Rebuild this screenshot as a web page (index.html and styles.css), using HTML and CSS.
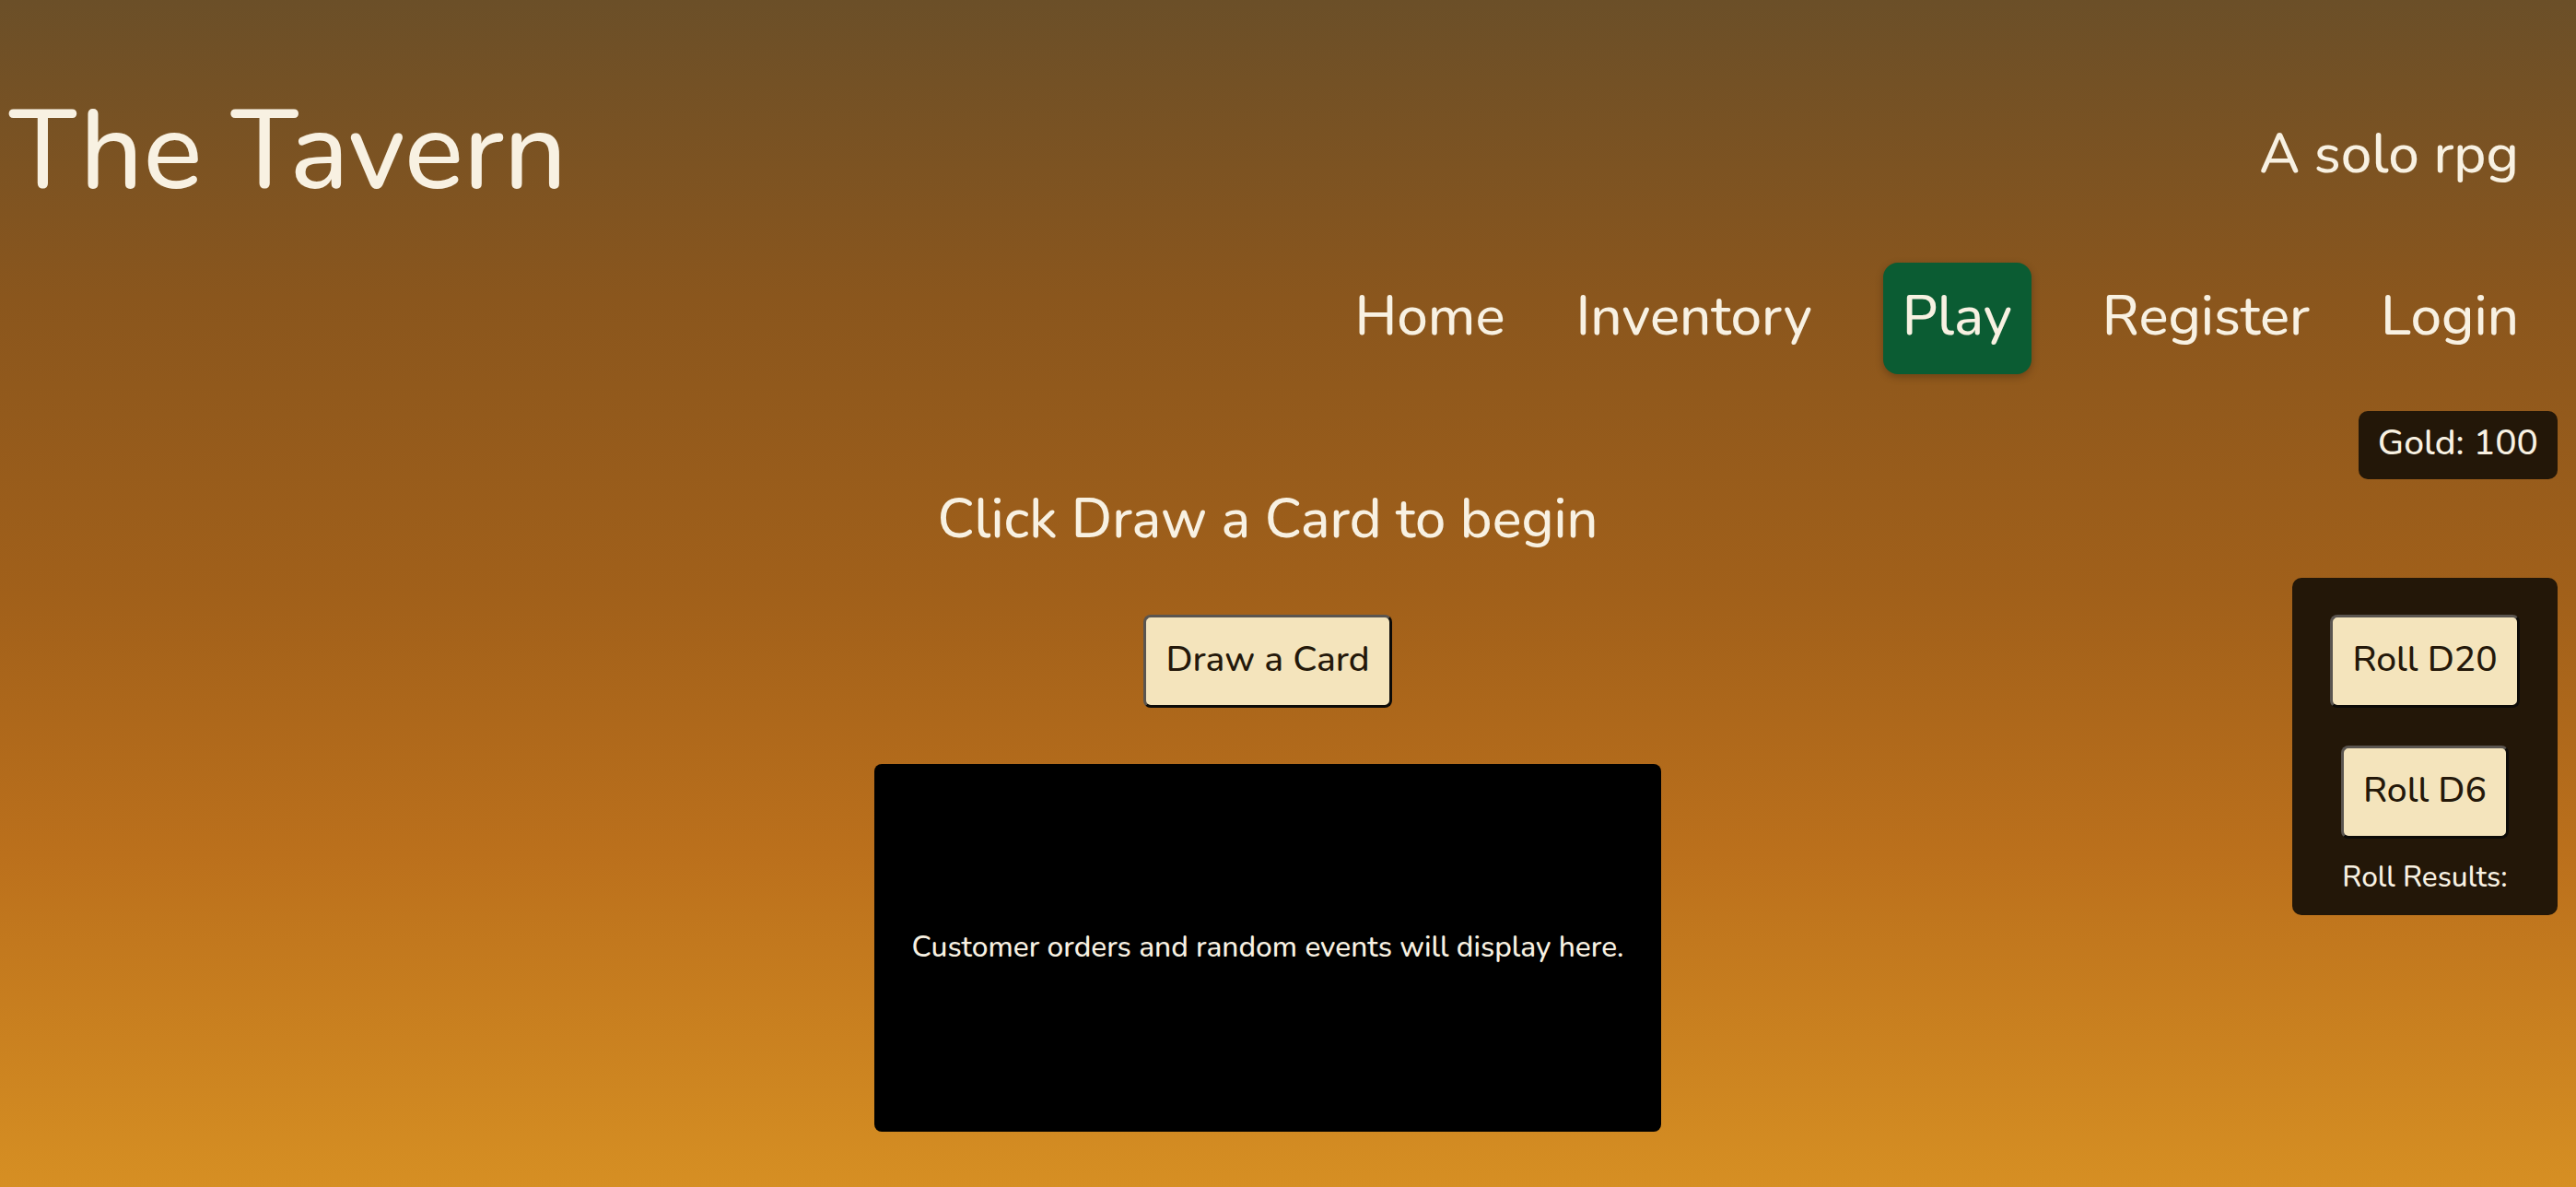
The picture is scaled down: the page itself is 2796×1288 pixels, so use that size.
FILE: index.html
```html
<!DOCTYPE html>
<html lang="en">
<head>
<meta charset="utf-8">
<title>The Tavern</title>
<link rel="stylesheet" href="styles.css">
</head>
<body>
<div class="page">
  <header class="site-header">
    <div class="brand-row">
      <h1 class="brand">The Tavern</h1>
      <p class="tagline">A solo rpg</p>
    </div>
    <nav class="main-nav">
      <a class="nav-link" href="#">Home</a>
      <a class="nav-link" href="#">Inventory</a>
      <a class="nav-link is-active" href="#">Play</a>
      <a class="nav-link" href="#">Register</a>
      <a class="nav-link" href="#">Login</a>
    </nav>
  </header>

  <div class="gold-row">
    <div class="gold">Gold: 100</div>
  </div>

  <main class="play">
    <h2 class="prompt">Click Draw a Card to begin</h2>
    <button class="btn" type="button">Draw a Card</button>
    <div class="card-display">
      <p class="card-text">Customer orders and random events will display here.</p>
    </div>
  </main>

  <aside class="dice-panel">
    <button class="btn" type="button">Roll D20</button>
    <button class="btn" type="button">Roll D6</button>
    <p class="roll-results">Roll Results:</p>
  </aside>
</div>
</body>
</html>
```

FILE: styles.css
```css
* { box-sizing: border-box; }

html, body {
  margin: 0;
  padding: 0;
}

body {
  min-height: 1288px;
  font-family: "Nunito", "Lato", "Noto Sans", sans-serif;
  font-weight: 500;
  color: #f8f0df;
  background: linear-gradient(to bottom, #6b4f28 0%, #8a561d 25%, #a1601a 50%, #bb701c 72%, #d68f23 100%);
  line-height: 1.2;
}

.page {
  position: relative;
  min-height: 1288px;
}

.site-header {
  display: flex;
  flex-direction: column;
  padding: 89px 62px 0 10px;
}

.brand-row {
  display: flex;
  justify-content: space-between;
  align-items: center;
  height: 152px;
}

.brand {
  margin: 0;
  font-size: 120px;
  font-weight: 500;
  line-height: 1.2;
  color: #f8f1e2;
}

.tagline {
  margin: 3px 0 0;
  font-size: 60px;
  font-weight: 500;
  color: #f8f1e2;
}

.main-nav {
  display: flex;
  justify-content: flex-end;
  align-items: center;
  gap: 77px;
  margin-top: 44px;
}

.nav-link {
  display: block;
  padding: 22px 0 27px;
  font-size: 60px;
  font-weight: 500;
  color: #f8f1e2;
  text-decoration: none;
  border-radius: 16px;
}

.nav-link.is-active {
  padding: 22px 21px 27px;
  background: #0b5c33;
  box-shadow: 0 3px 8px rgba(0, 0, 0, 0.25);
}

.gold-row {
  display: flex;
  justify-content: flex-end;
  padding-right: 20px;
  margin-top: 40px;
}

.gold {
  background: #231708;
  border-radius: 10px;
  padding: 12px 21px 15px;
  font-size: 39px;
  color: #f8f1e2;
}

.play {
  display: flex;
  flex-direction: column;
  align-items: center;
  padding-right: 44px;
}

.prompt {
  margin: 8px 0 0;
  font-size: 59.4px;
  font-weight: 500;
  color: #f8f1e2;
}

.btn {
  font-family: inherit;
  font-size: 39px;
  font-weight: 500;
  color: #24180a;
  background: #f4e4bc;
  border: 3px solid;
  border-color: #5a5550 #0d0b08 #0d0b08 #5a5550;
  border-radius: 8px;
  padding: 23px 21px 25px;
  line-height: 1.2;
  cursor: pointer;
}

.play .btn {
  margin-top: 68px;
}

.card-display {
  margin-top: 61px;
  width: 854px;
  height: 399px;
  background: #000;
  border-radius: 8px;
  display: flex;
  align-items: center;
  justify-content: center;
}

.card-text {
  margin: 0;
  font-size: 31.7px;
  font-weight: 500;
  color: #f8f1e2;
}

.dice-panel {
  position: absolute;
  top: 627px;
  right: 20px;
  width: 288px;
  height: 366px;
  background: #231708;
  border-radius: 10px;
  padding: 40px 0 0;
  display: flex;
  flex-direction: column;
  align-items: center;
  gap: 41px;
}

.roll-results {
  margin: -18px 0 0;
  font-size: 31.5px;
  font-weight: 500;
  color: #f8f1e2;
}
```
